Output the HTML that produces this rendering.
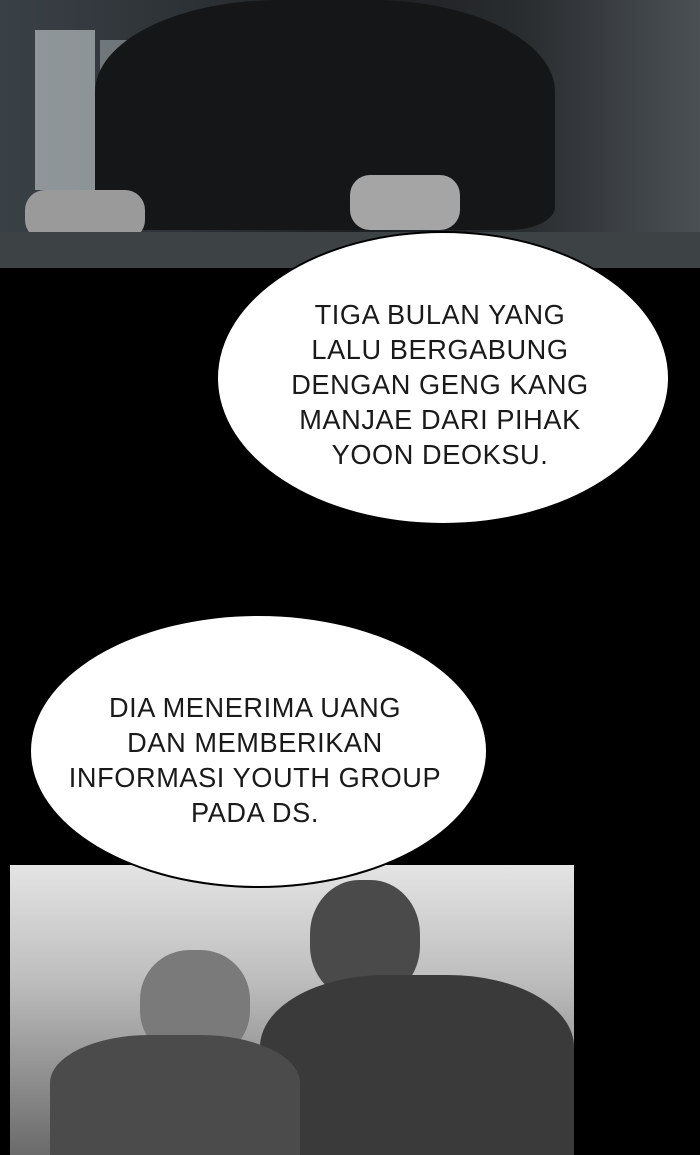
<!DOCTYPE html>
<html><head><meta charset="utf-8"><style>
html,body{margin:0;padding:0;background:#000;}
body{width:700px;height:1155px;position:relative;overflow:hidden;font-family:"Liberation Sans",sans-serif;}
.top{position:absolute;left:0;top:0;width:700px;height:268px;background:linear-gradient(90deg,#3a4146 0%,#2b3034 30%,#1c1e20 50%,#2a2d30 75%,#4a5054 100%);}
.bub{position:absolute;background:#fff;border-radius:50%;border:2px solid #000;}
.txt{position:absolute;color:#1a1a1a;text-align:center;font-size:28px;line-height:35px;letter-spacing:0.6px;transform:scaleX(0.97);}
.bot{position:absolute;left:10px;top:865px;width:564px;height:290px;background:linear-gradient(180deg,#e4e4e4 0%,#bdbdbd 40%,#6a6a6a 100%);}
</style></head><body>
<div class="top">
<div style="position:absolute;left:35px;top:30px;width:60px;height:160px;background:#c9d0d2;opacity:.6"></div>
<div style="position:absolute;left:100px;top:40px;width:45px;height:140px;background:#aeb5b8;opacity:.5"></div>
<div style="position:absolute;left:95px;top:0;width:460px;height:230px;background:#151617;border-radius:40% 40% 10% 10%"></div>
<div style="position:absolute;left:25px;top:190px;width:120px;height:50px;background:#9a9a9a;border-radius:20px"></div>
<div style="position:absolute;left:350px;top:175px;width:110px;height:55px;background:#a5a5a5;border-radius:20px"></div>
<div style="position:absolute;left:0;top:232px;width:700px;height:36px;background:#3d4245"></div>
</div>
<div class="bot">
<div style="position:absolute;left:300px;top:15px;width:110px;height:120px;background:#4a4a4a;border-radius:45%"></div>
<div style="position:absolute;left:250px;top:110px;width:314px;height:180px;background:#3a3a3a;border-radius:40% 40% 0 0"></div>
<div style="position:absolute;left:130px;top:85px;width:110px;height:110px;background:#7a7a7a;border-radius:45%"></div>
<div style="position:absolute;left:40px;top:170px;width:250px;height:120px;background:#4b4b4b;border-radius:40% 40% 0 0"></div>
</div>
<div class="bub" style="left:216px;top:231px;width:450px;height:290px"></div>
<div class="txt" style="left:220px;top:297px;width:440px">TIGA BULAN YANG<br>LALU BERGABUNG<br>DENGAN GENG KANG<br>MANJAE DARI PIHAK<br>YOON DEOKSU.</div>
<div class="bub" style="left:29px;top:614px;width:455px;height:270px"></div>
<div class="txt" style="left:35px;top:690px;width:440px">DIA MENERIMA UANG<br>DAN MEMBERIKAN<br>INFORMASI YOUTH GROUP<br>PADA DS.</div>
</body></html>
